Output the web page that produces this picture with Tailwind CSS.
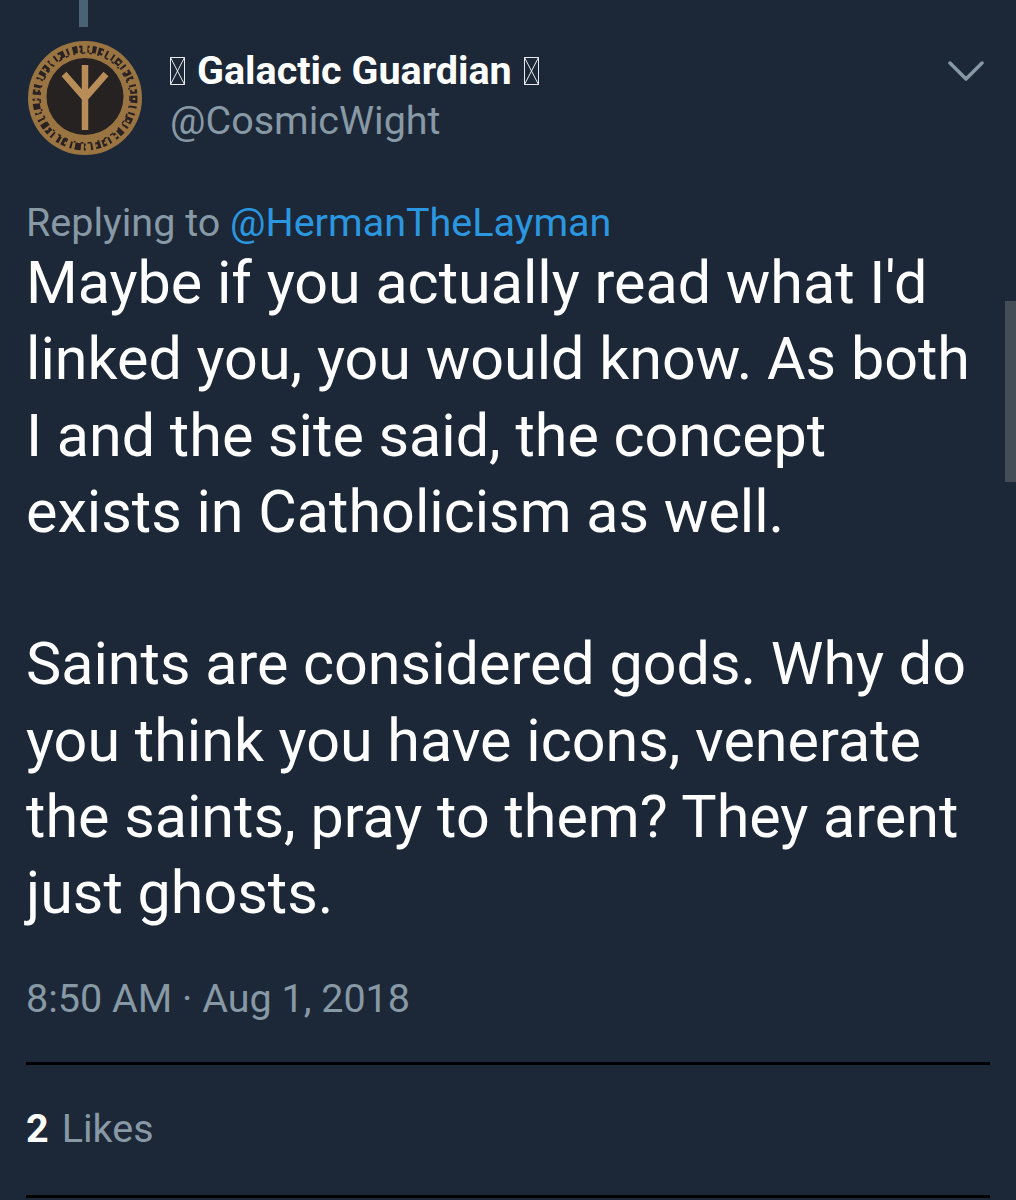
<!DOCTYPE html>
<html>
<head>
<meta charset="utf-8">
<script src="https://cdn.jsdelivr.net/npm/@tailwindcss/browser@4"></script>
</head>
<body class="bg-[#1c2733]">
<div class="relative w-[1016px] h-[1200px] overflow-hidden bg-[#1c2837] font-['Roboto',sans-serif] text-white">
  <div class="absolute left-[1005px] top-[301px] w-[11px] h-[181px] bg-[#444c56]"></div>
  <div class="ml-[79px] w-[9px] h-[27px] bg-[#4a6276]"></div>
  <div class="px-[26px]">
    <div class="flex mt-[13px] h-[116px]">
      <svg class="w-[116px] h-[116px] shrink-0 ml-[1px]" viewBox="0 0 116 116">
        <defs><filter id="soft" x="-5%" y="-5%" width="110%" height="110%"><feGaussianBlur stdDeviation="0.6"/></filter></defs>
        <g filter="url(#soft)">
          <circle cx="58" cy="58" r="57" fill="#9a7443"/>
          <circle cx="58" cy="58" r="49" fill="none" stroke="#2a2322" stroke-width="7" stroke-dasharray="5 3 2 5 2 3 6 3 2 4 5 2 3 5 2 3 4 2"/>
          <circle cx="58" cy="58" r="49" fill="none" stroke="#9a7443" stroke-width="2.5" stroke-dasharray="2 8 3 10 2 7"/>
          <circle cx="58" cy="58" r="45" fill="none" stroke="#2a2322" stroke-width="1.5" stroke-dasharray="3 5 2 6 4 4"/>
          <circle cx="58" cy="56.5" r="40" fill="#9a7443"/>
          <circle cx="58" cy="56.5" r="38.5" fill="#252124"/>
          <path d="M58 25V90M58 58L37 34M58 58L79 34" fill="none" stroke="#b98d58" stroke-width="6.5"/>
        </g>
      </svg>
      <div class="ml-[27px] flex-1 min-w-0">
        <div class="flex items-center h-[36px] mt-[13px] text-[39.5px] font-bold leading-[36px]">
          <svg class="w-[15px] h-[28px] mr-[12px] shrink-0" viewBox="0 0 15 28"><path d="M.5.5h14v27H.5zM.5.5l14 27M14.5.5l-14 27" fill="none" stroke="#e8eaec" stroke-width="1"/></svg>
          <span>Galactic Guardian</span>
          <svg class="w-[15px] h-[28px] ml-[12px] shrink-0" viewBox="0 0 15 28"><path d="M.5.5h14v27H.5zM.5.5l14 27M14.5.5l-14 27" fill="none" stroke="#e8eaec" stroke-width="1"/></svg>
        </div>
        <div class="text-[39.5px] leading-[44px] mt-[10px] text-[#8899a6]">@CosmicWight</div>
      </div>
      <svg class="w-[36px] h-[20px] mt-[21px] mr-[6px] shrink-0" viewBox="0 0 36 20"><path d="M2 2L18 18L34 2" fill="none" stroke="#8899a6" stroke-width="3.5" stroke-linecap="round" stroke-linejoin="round"/></svg>
    </div>
    <div class="mt-[45px] text-[39.5px] leading-[44px] text-[#8899a6]">Replying to <span class="text-[#2b97e0]">@HermanTheLayman</span></div>
    <div class="mt-[0px] text-[59.25px] leading-[76.25px] text-white">
      <div>Maybe if you actually read what I'd</div>
      <div>linked you, you would know. As both</div>
      <div>I and the site said, the concept</div>
      <div>exists in Catholicism as well.</div>
      <div class="h-[76.25px]"></div>
      <div>Saints are considered gods. Why do</div>
      <div>you think you have icons, venerate</div>
      <div>the saints, pray to them? They arent</div>
      <div>just ghosts.</div>
    </div>
    <div class="mt-[46px] text-[39.5px] leading-[44px] text-[#8899a6]">8:50 AM · Aug 1, 2018</div>
    <div class="mt-[41px] h-[3px] bg-black"></div>
    <div class="h-[130px] flex items-center text-[39.5px] pb-[3px]"><span class="font-bold text-white">2</span><span class="ml-[13px] text-[#8899a6]">Likes</span></div>
    <div class="h-[3px] bg-black"></div>
  </div>
</div>
</body>
</html>
